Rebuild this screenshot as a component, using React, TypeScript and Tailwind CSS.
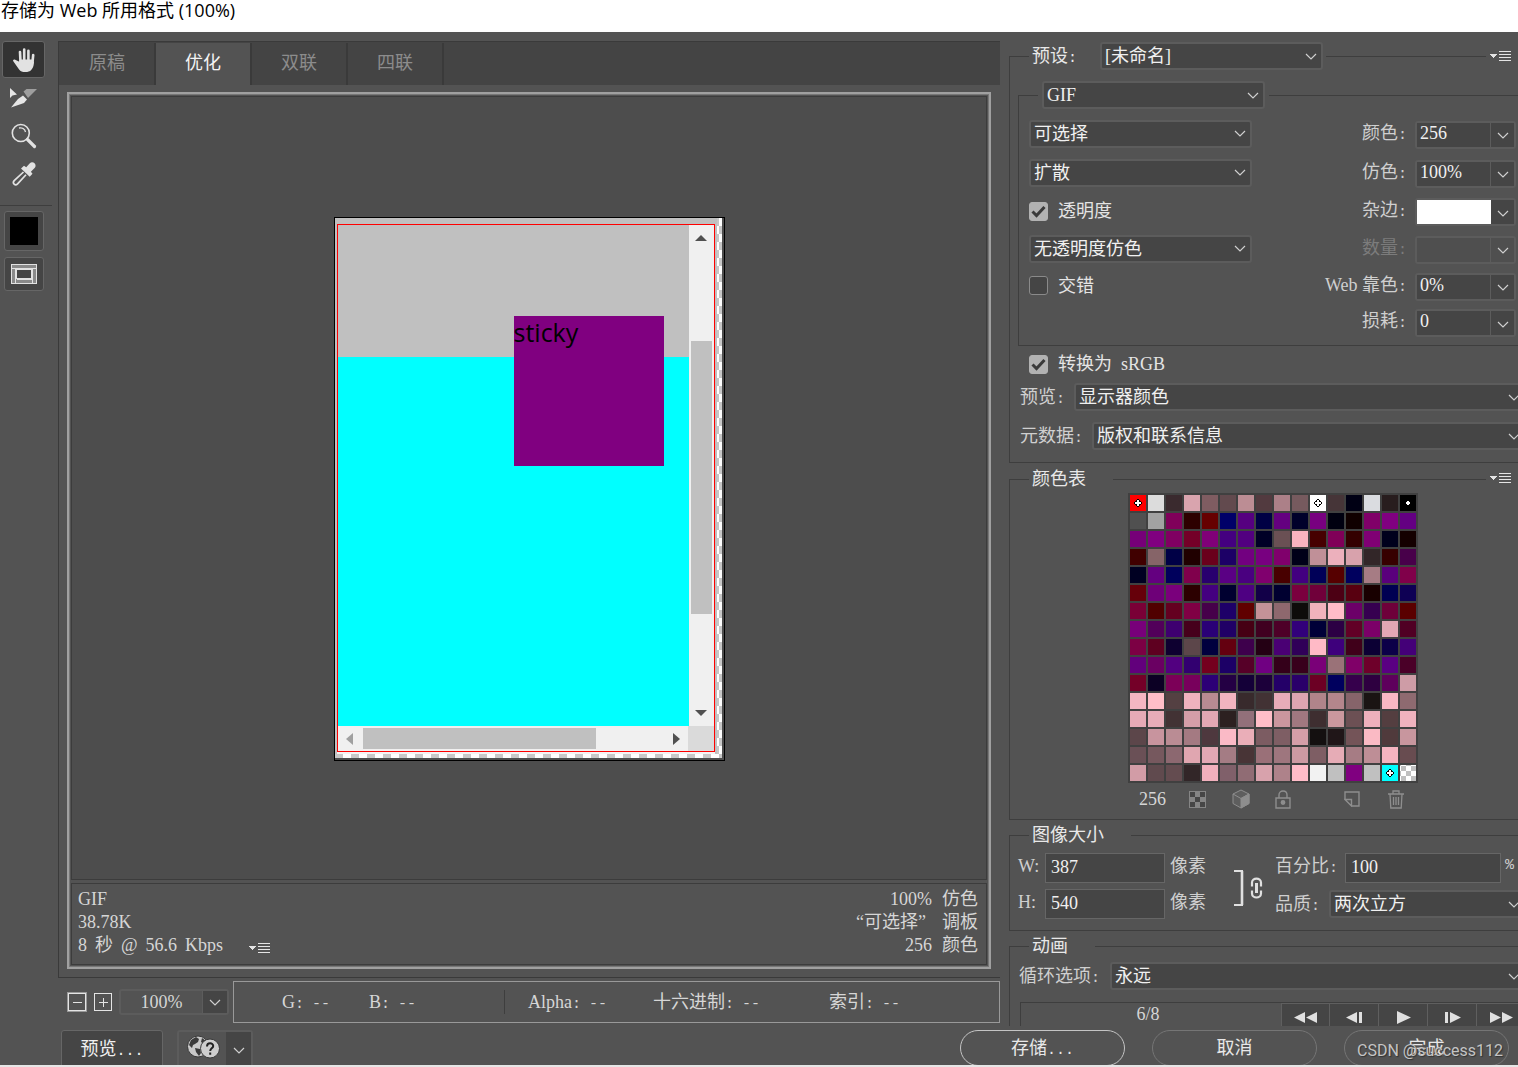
import React, { useId, useState } from "react";

const PALETTE: string[] = [
  "ff0000 dcdcdc 3a2a2e d9a4ae 7f5c61 624a4e bc8d94 523a3f ac8088 765a5e ffffff 463538 000014 dadce0 281d1e 000000",
  "505050 a2a2a2 80005a 2d0000 660000 000068 560080 000044 640080 00002a 780080 000010 100000 800068 800080 640082",
  "760078 800080 800062 740028 800078 440080 520080 000026 6a5054 f8b4c0 460000 800058 340000 800074 00001c 140000",
  "400000 866468 000046 200000 6a001c 1c0066 720080 780080 80006c 000018 c09098 ecb0bc d8a2ac 322628 360000 48004a",
  "000022 640080 00005c 80004c 28006e 5a0084 4a0080 80006e 480000 420080 000058 560000 00005e a67c84 5a007c 80004a",
  "66000a 6e0078 7a007c 2c0000 440080 000030 4e0082 120048 000030 7a003e 70003a 4c0014 580010 180000 000052 0e0054",
  "7a0036 500000 640020 800044 46004a 1e0068 600000 c49298 8e686e 0e0c0a f0b2bc ffbcc8 6c0068 360050 6e003a 5a0000",
  "78007a 52005a 3e0070 46001c 2a0076 200066 460014 400020 4e0028 32007a 000038 2c0044 620026 7c0068 e2a8b4 500024",
  "7c0044 5e0020 0e0030 5c464a 00003e 640010 3e004c 240014 4a0074 300058 ffbac6 3e007c 40001a 0c0034 0c0048 440078",
  "62007c 6a0062 520080 320070 74001e 1c0066 560028 700082 34001a 38001c 7a0078 9a7278 800068 6e002a 5a0082 4a0028",
  "740028 0c0024 7c0058 78005c 2c0076 240044 140038 1c003a 240068 2a006a 6c0024 00005e 36004c 2e0040 5e005c ce9ca6",
  "f4b6c2 ffbec8 544042 efb2be b88a92 f2b4c0 382a2c 423234 e8acb8 dea4b0 b0848a b4868c 86646a 1a1413 f8b8c4 8e6a70",
  "e6aab6 e8acb8 423234 d49ea8 e2a8b4 2c2020 92707a ffbec8 ca969e a07880 3e2e30 ca989e 6c5054 eeb0bc 543e40 f0b2be",
  "5c464a c8949e ba8c94 a47a82 4e383e fabac6 eaaeb8 7c5c62 7e5e64 d49ea8 141010 201618 745458 fabac4 503a3c c8969e",
  "6a5056 76585e 8c6870 e0a6b0 e2a8b4 a47c84 483436 9a7078 9e767e cc9aa2 7e5e64 e6acb6 a67c84 be8e96 f4b4c0 684c50",
  "d29ca6 604a4e 644c50 322628 f0b0bc 80606a 906c74 d8a2ac ae828a ffbcc8 f2f2f2 c0c0c0 800080 c0c0c0 00ffff ffffff",
]
  .join(" ")
  .split(" ");

const MARKED = [0, 10, 15, 254];

/* Colons, dots and dashes take the fixed width of half an ideograph. */
function Txt({ children }: { children: string }) {
  return (
    <>
      {children.split(/(:|\.\.\.|--)/).map((part, i) =>
        i % 2 === 1 ? (
          <span key={i} className="font-['Liberation_Mono',monospace] text-[15px] leading-none">
            {part}
          </span>
        ) : (
          part
        ),
      )}
    </>
  );
}

function Chevron() {
  return (
    <svg width="12" height="7" viewBox="0 0 12 7" fill="none" stroke="#d0d0d0" strokeWidth="1.2" aria-hidden="true">
      <path d="M1 1l5 5 5-5" />
    </svg>
  );
}

function Drop({ id, value, label, className = "" }: { id?: string; value: string; label?: string; className?: string }) {
  return (
    <div className={`relative h-7 ${className}`}>
      <select
        id={id}
        aria-label={label}
        className="block h-7 w-full appearance-none rounded-[3px] border-2 border-[#5c5c5c] bg-[#454545] pr-6 pb-0.5 pl-[3px] leading-6 text-[#f0f0f0] outline-none"
      >
        <option>{value}</option>
      </select>
      <span className="pointer-events-none absolute inset-y-0 right-1.5 flex items-center">
        <Chevron />
      </span>
    </div>
  );
}

function Combo({ label, value, disabled = false, swatch = false }: { label: string; value: string; disabled?: boolean; swatch?: boolean }) {
  const id = useId();
  return (
    <div className="flex items-center justify-end">
      <label htmlFor={id} className={`pr-2 pb-1 leading-6 ${disabled ? "text-[#7c7c7c]" : "text-[#cfcfcf]"}`}>
        <Txt>{label}</Txt>
      </label>
      <div className="flex h-7 w-[101px] rounded-[3px] border-2 border-[#5c5c5c]">
        {swatch ? (
          <button id={id} type="button" className="w-[74px] bg-white" />
        ) : (
          <input
            id={id}
            defaultValue={value}
            disabled={disabled}
            className={`w-[74px] min-w-0 border-r border-[#5c5c5c] pb-1 pl-[3px] leading-5 text-[#f0f0f0] outline-none ${disabled ? "bg-[#4f4f4f]" : "bg-[#454545]"}`}
          />
        )}
        <button type="button" aria-label={`${label} 菜单`} disabled={disabled} className={`flex flex-1 items-center justify-center pt-0.5 ${disabled ? "bg-[#4f4f4f]" : "bg-[#454545]"}`}>
          <Chevron />
        </button>
      </div>
    </div>
  );
}

function Check({ label, on = false }: { label: string; on?: boolean }) {
  const [checked, setChecked] = useState(on);
  return (
    <label className="flex items-center gap-2.5 leading-6 text-[#e4e4e4]">
      <span className="relative flex size-[19px]">
        <input
          type="checkbox"
          checked={checked}
          onChange={(e) => setChecked(e.target.checked)}
          className="size-[19px] appearance-none rounded-[3px] border border-[#8a8a8a] bg-[#454545] checked:border-[#b2b2b2] checked:bg-[#b2b2b2]"
        />
        {checked && (
          <svg className="pointer-events-none absolute inset-0" width="19" height="19" viewBox="0 0 19 19" fill="none" stroke="#3a3a3a" strokeWidth="3" aria-hidden="true">
            <path d="M3.500 9.500l4 4 8-8.500" />
          </svg>
        )}
      </span>
      <span className="whitespace-pre">{label}</span>
    </label>
  );
}

function MenuIcon() {
  return (
    <svg width="22" height="12" viewBox="0 0 22 12" aria-hidden="true" shapeRendering="crispEdges">
      <path d="M0 4h7L3.500 8z" fill="#e4e4e4" />
      <path d="M9 1.500h12M9 4.500h12M9 7.500h12M9 10.500h12" stroke="#e4e4e4" strokeWidth="1" />
    </svg>
  );
}

function PanelMenu({ label }: { label: string }) {
  return (
    <button type="button" aria-label={label} className="absolute -top-5 right-0 bg-[#535353] pr-1.5 pl-1">
      <MenuIcon />
    </button>
  );
}

function Marker({ dark }: { dark: boolean }) {
  return (
    <svg width="16" height="16" viewBox="0 0 16 16" aria-hidden="true" shapeRendering="crispEdges">
      {!dark && <path d="M7 4h2v1h1v1h1v1h1v2h-1v1h-1v1h-1v1H7v-1H6v-1H5V9H4V7h1V6h1V5h1z" fill="#000" />}
      <path d="M7 6h2v1h1v2H9v1H7V9H6V7h1z" fill="#fff" />
      {!dark && <path d="M7 5h2v1H7zM7 10h2v1H7zM5 7h1v2H5zM10 7h1v2h-1z" fill="#fff" />}
    </svg>
  );
}

function Toolbar() {
  return (
    <aside className="flex w-[58px] shrink-0 flex-col pt-[9px]">
      <button type="button" aria-label="抓手工具" className="ml-[2px] flex h-[37px] w-[43px] items-center justify-center rounded-[3px] border border-[#666] bg-[#333]">
        <svg width="24" height="26" viewBox="0 0 24 26" fill="none" stroke="#e2e2e2" strokeLinecap="round" aria-hidden="true">
          <path d="M8.500 15L8 5M12.200 14V2.500M16.400 14V3.800M20.500 15L21.200 8" strokeWidth="2.600" />
          <path d="M6.800 14.500H22c0 3-.6 6-2.600 8.300-1.500 1.900-3.700 2.200-6 2.200-3 0-4.900-.6-6.300-2.600L1.300 14.300c-.8-1.300.6-2.300 1.900-1.500z" fill="#e2e2e2" stroke="none" />
          <path d="M7.500 12.500h13.500v4h-13.500z" fill="#e2e2e2" stroke="none" />
        </svg>
      </button>
      <button type="button" aria-label="切片选择工具" className="ml-[9px] flex h-10 w-7 items-center">
        <svg width="28" height="20" viewBox="0 0 28 20" aria-hidden="true">
          <path d="M1 0v10l2.500-2.500L8 6.500z" fill="#e6e6e6" />
          <path d="M14.500 3.500l3-2.500H28L19 10z" fill="#9e9e9e" />
          <path d="M14 7.500l4 4-3 3.500L2 19.500 9 11z" fill="#e6e6e6" />
        </svg>
      </button>
      <button type="button" aria-label="缩放工具" className="ml-[11px] flex h-9 w-7 items-center">
        <svg width="26" height="26" viewBox="0 0 26 26" fill="none" stroke="#e2e2e2" aria-hidden="true">
          <circle cx="9.800" cy="10" r="8.500" strokeWidth="1.600" />
          <path d="M8 5c3-.6 5.800 1 6.500 4" strokeWidth="1.300" />
          <path d="M16.500 16.500l7 7" strokeWidth="3.200" strokeLinecap="round" />
        </svg>
      </button>
      <button type="button" aria-label="吸管工具" className="ml-[12px] flex h-10 w-7 items-center">
        <svg width="24" height="24" viewBox="0 0 24 24" fill="none" aria-hidden="true">
          <path d="M11.500 10L2.200 18.600c-2.300 2.900 1 5.500 3.400 3.300L14 12.700" stroke="#e2e2e2" strokeWidth="1.700" />
          <path d="M9 6.500l3-2.700 2.200 1.400 3.400-3.700c3.300-3.300 8 1.200 5 4.600l-3.700 3.700 1.600 2-2.800 3z" fill="#e2e2e2" />
        </svg>
      </button>
      <hr className="mt-[11px] w-[52px] border-0 border-t border-[#3e3e3e]" />
      <button type="button" aria-label="吸管颜色" className="mt-[5px] ml-1 flex size-10 items-center justify-center rounded-[3px] border border-[#666] bg-[#454545]">
        <span className="size-7 bg-black" />
      </button>
      <button type="button" aria-label="切换切片可见性" className="mt-1.5 ml-1 flex h-[34px] w-10 items-center justify-center rounded-[3px] border border-[#666] bg-[#454545]">
        <svg width="26" height="20" viewBox="0 0 26 20" fill="none" aria-hidden="true" shapeRendering="crispEdges">
          <path d="M.500.500h25v19H.500z" fill="#8a8a8a" stroke="#e2e2e2" />
          <path d="M5.500 5.500h15v9h-15z" fill="#454545" stroke="#e2e2e2" />
          <path d="M0 4.500h26M4.500 5v15M21.500 5v15M6 15.500h15" stroke="#e2e2e2" />
        </svg>
      </button>
    </aside>
  );
}

function Canvas() {
  return (
    <div className="h-[544px] w-[391px] border border-black bg-[#4d4d4d] pr-0.5 pb-0.5">
      <div className="h-full bg-[conic-gradient(#c8c8c8_25%,#fff_0_50%,#c8c8c8_0_75%,#fff_0)] bg-[length:16px_16px] pr-[5px] pb-1">
        <div className="h-full bg-[#c0c0c0] pt-1.5 pr-0.5 pl-0.5">
          <div className="flex h-full flex-col border-b-2 border-[#f4f4f4]">
            <div className="flex flex-1 flex-col border border-[#f00] bg-[#f0f0f0]">
              <div className="flex flex-1">
                <div className="relative flex flex-1 flex-col">
                  <div className="h-[132px] bg-[#c0c0c0]" />
                  <div className="flex-1 bg-[#0ff]" />
                  <div className="absolute top-[91px] left-44 size-[150px] bg-[#800080] font-['Open_Sans',sans-serif] text-[25px] leading-8 text-black">sticky</div>
                </div>
                <div className="flex w-[25px] flex-col items-center py-2.5">
                  <svg width="12" height="6" viewBox="0 0 12 6" fill="#505050" aria-hidden="true"><path d="M0 6l6-6 6 6z" /></svg>
                  <div className="mt-[100px] h-[273px] w-[21px] bg-[#c0c0c0]" />
                  <svg className="mt-auto" width="12" height="6" viewBox="0 0 12 6" fill="#505050" aria-hidden="true"><path d="M0 0l6 6 6-6z" /></svg>
                </div>
              </div>
              <div className="flex h-[25px] items-center">
                <svg className="ml-2" width="7" height="12" viewBox="0 0 7 12" fill="#a0a0a0" aria-hidden="true"><path d="M7 0L0 6l7 6z" /></svg>
                <div className="ml-2.5 h-[21px] w-[233px] bg-[#c0c0c0]" />
                <svg className="mr-2 ml-auto" width="7" height="12" viewBox="0 0 7 12" fill="#505050" aria-hidden="true"><path d="M0 0l7 6-7 6z" /></svg>
                <div className="h-full w-[26px] bg-[#dadada]" />
              </div>
            </div>
          </div>
        </div>
      </div>
    </div>
  );
}

function Readout({ name, className }: { name: string; className: string }) {
  return (
    <span className={`flex shrink-0 gap-2 ${className}`}>
      <span><Txt>{name}</Txt></span>
      <span><Txt>--</Txt></span>
    </span>
  );
}

function Center() {
  const [tab, setTab] = useState("优化");
  return (
    <section className="flex min-w-0 flex-1 flex-col pt-[9px]">
      <div className="flex min-h-0 flex-1 flex-col border-y border-l border-[#3a3a3a]">
        <div role="tablist" className="flex h-[43px] shrink-0 bg-[#444] pt-px pl-px">
          {["原稿", "优化", "双联", "四联"].map((t) => (
            <button
              key={t}
              type="button"
              role="tab"
              aria-selected={t === tab}
              onClick={() => setTab(t)}
              className={`w-24 border-r-2 border-[#3a3a3a] pb-0.5 ${t === tab ? "bg-[#535353] text-[#f4f4f4]" : "text-[#8c8c8c]"}`}
            >
              {t}
            </button>
          ))}
        </div>
        <div className="mt-[7px] mr-[9px] mb-2 ml-2 flex min-h-0 flex-1 flex-col gap-[3px] border-2 border-[#a0a0a0] p-0.5 shadow-[inset_0_0_0_1px_#777]">
          <div className="flex min-h-0 flex-1 items-center justify-center border border-[#3c3c3c] bg-[#4d4d4d] pt-0.5">
            <Canvas />
          </div>
          <div className="flex h-[82px] shrink-0 justify-between border border-[#3c3c3c] px-1.5 pt-1 text-[#d6d6d6]">
            <div className="flex flex-col leading-[23px]">
              <span>GIF</span>
              <span>38.78K</span>
              <span className="flex items-center gap-2">
                <span>8</span><span>秒</span><span>@</span><span>56.6</span><span>Kbps</span>
                <button type="button" aria-label="下载速度菜单" className="ml-[18px] pt-1"><MenuIcon /></button>
              </span>
            </div>
            <div className="flex flex-col items-end pr-0.5 leading-[23px]">
              <span className="flex gap-2.5"><span>100%</span><span>仿色</span></span>
              <span className="flex gap-4"><span>“可选择”</span><span>调板</span></span>
              <span className="flex gap-2.5"><span>256</span><span>颜色</span></span>
            </div>
          </div>
        </div>
      </div>
      <div className="flex h-12 shrink-0 pt-[3px] text-[#d6d6d6]">
        <div className="flex h-[42px] w-[175px] shrink-0 items-center pl-2.5">
          <button type="button" aria-label="缩小" className="flex size-[18px] items-center justify-center border border-[#e4e4e4] outline outline-[#999]">
            <svg width="9" height="9" stroke="#e4e4e4" aria-hidden="true"><path d="M0 4.500h9" /></svg>
          </button>
          <button type="button" aria-label="放大" className="ml-2 flex size-[18px] items-center justify-center border border-[#e4e4e4]">
            <svg width="9" height="9" stroke="#e4e4e4" aria-hidden="true"><path d="M0 4.500h9M4.500 0v9" /></svg>
          </button>
          <div className="ml-[7px] flex h-[26px] w-[110px] rounded-[3px] border-2 border-[#5c5c5c]">
            <input aria-label="缩放级别" defaultValue="100%" className="min-w-0 flex-1 border-r border-[#5c5c5c] text-center outline-none" />
            <button type="button" aria-label="缩放级别菜单" className="flex w-6 items-center justify-center bg-[#454545]"><Chevron /></button>
          </div>
        </div>
        <div className="flex h-[42px] min-w-0 flex-1 items-center overflow-hidden border border-[#999] leading-6">
          <Readout name="G:" className="ml-12 w-[87px]" />
          <Readout name="B:" className="w-[135px]" />
          <span className="h-6 w-px bg-[#3e3e3e]" />
          <Readout name="Alpha:" className="ml-[23px] w-[125px]" />
          <Readout name="十六进制:" className="w-44" />
          <Readout name="索引:" className="" />
        </div>
      </div>
    </section>
  );
}

const groupClass = "relative min-w-0 border border-r-0 border-[#3e3e3e]";

function ColorTable() {
  return (
    <fieldset className={`${groupClass} mt-[3px] pb-1`}>
      <legend className="ml-[19px] h-[26px] w-[84px] pl-[3px] leading-[26px] text-[#e8e8e8]">颜色表</legend>
      <PanelMenu label="颜色表菜单" />
      <div className="ml-[118px] w-[290px] pt-px">
        <div className="grid grid-cols-16 gap-0.5 bg-[#404040] p-0.5">
          {PALETTE.map((c, i) =>
            i === 255 ? (
              <div key={i} className="size-4 bg-[conic-gradient(#fff_25%,#bfbfbf_0_50%,#fff_0_75%,#bfbfbf_0)] bg-[length:10px_10px] bg-[position:-4px_-4px]" />
            ) : (
              <div key={i} className="size-4" style={{ backgroundColor: `#${c}` }}>
                {MARKED.includes(i) && <Marker dark={i === 15} />}
              </div>
            ),
          )}
        </div>
        <div className="flex h-8 items-center pl-[11px] text-[#d6d6d6]">
          <span className="w-[50px]">256</span>
          <button type="button" aria-label="映射为透明" className="w-[43px]">
            <svg width="17" height="17" viewBox="0 0 17 17" aria-hidden="true">
              <path d="M0 0h17v17H0z" fill="#858585" />
              <path d="M1 1h5v5H1zM11 1h5v5h-5zM6 6h5v5H6zM1 11h5v5H1zM11 11h5v5h-5z" fill="#464646" />
            </svg>
          </button>
          <button type="button" aria-label="Web 安全颜色" className="w-[43px]">
            <svg width="18" height="20" viewBox="0 0 18 20" stroke="#8e8e8e" fill="none" aria-hidden="true">
              <path d="M9 1l8 4v9.500L9 19l-8-4.500V5z" fill="#5e5e5e" />
              <path d="M9 9.500L17 5v9.500L9 19z" fill="#8e8e8e" />
              <path d="M1 5l8 4.500L17 5" />
            </svg>
          </button>
          <button type="button" aria-label="锁定颜色" className="w-[69px]">
            <svg width="16" height="19" viewBox="0 0 16 19" stroke="#8e8e8e" strokeWidth="1.400" fill="none" aria-hidden="true">
              <path d="M1 8h14v10H1zM4 8V5c0-5.300 8-5.300 8 0v3" />
              <circle cx="8" cy="12.500" r="1.700" fill="#8e8e8e" />
            </svg>
          </button>
          <button type="button" aria-label="新建颜色" className="w-[43px]">
            <svg width="16" height="16" viewBox="0 0 16 16" stroke="#8e8e8e" strokeWidth="1.400" fill="none" aria-hidden="true">
              <path d="M1 8V1h14v14H8M1 8.500h6.500V15zM1 8.500L7.500 15" />
            </svg>
          </button>
          <button type="button" aria-label="删除颜色">
            <svg width="18" height="19" viewBox="0 0 18 19" stroke="#8e8e8e" strokeWidth="1.300" fill="none" aria-hidden="true">
              <path d="M1 4h16M6 4V1h6v3M3 4l.8 14h10.400L15 4M6.500 7v8M9 7v8M11.500 7v8" />
            </svg>
          </button>
        </div>
      </div>
    </fieldset>
  );
}

function ImageSize() {
  const box = "h-[30px] border border-[#666] bg-[#454545] pl-[5px] pb-0.5 text-[#f0f0f0] outline-none";
  return (
    <fieldset className={`${groupClass} mt-0.5 pb-[11px]`}>
      <legend className="ml-[19px] h-[26px] w-[102px] pl-[3px] leading-[26px] text-[#e8e8e8]">图像大小</legend>
      <div className="flex items-center pt-[5px] pl-2 leading-[26px] text-[#cfcfcf]">
        <div className="flex w-[216px] flex-col gap-1.5">
          <div className="flex h-[30px]">
            <label htmlFor="w" className="w-[27px]">W:</label>
            <input id="w" defaultValue="387" className={`w-[120px] ${box}`} />
            <span className="pl-[5px]">像素</span>
          </div>
          <div className="flex h-[30px]">
            <label htmlFor="h" className="w-[27px]">H:</label>
            <input id="h" defaultValue="540" className={`w-[120px] ${box}`} />
            <span className="pl-[5px]">像素</span>
          </div>
        </div>
        <button type="button" aria-label="约束比例" className="w-[41px] pt-1">
          <svg width="30" height="36" viewBox="0 0 30 36" fill="none" stroke="#e0e0e0" aria-hidden="true">
            <path d="M0 1h8v34H0" strokeWidth="2" />
            <path d="M8 1v34" strokeWidth="2.600" />
            <path d="M18 16.500v-4c0-5.300 9-5.300 9 0v4M18 20.500v3c0 5.300 9 5.300 9 0v-3" strokeWidth="2.200" />
            <path d="M22.500 13v10" strokeWidth="3" />
          </svg>
        </button>
        <div className="-mr-2 flex flex-1 flex-col gap-1.5">
          <div className="flex h-[30px]">
            <label htmlFor="pct" className="w-[70px]"><Txt>百分比:</Txt></label>
            <input id="pct" defaultValue="100" className={`w-[156px] ${box}`} />
            <span className="pl-1 font-['Liberation_Mono',monospace] text-[15px]">%</span>
          </div>
          <div className="flex h-[30px] items-center">
            <label htmlFor="quality" className="w-[54px]"><Txt>品质:</Txt></label>
            <Drop id="quality" value="两次立方" className="flex-1" />
          </div>
        </div>
      </div>
    </fieldset>
  );
}

const PLAYBACK: [string, string][] = [
  ["第一帧", "M11 0v11L0 5.500zM23 0v11L12 5.500z"],
  ["上一帧", "M14 0v11L3 5.500zM16 0h3v11h-3z"],
  ["播放", "M5 -1v13l14-6.500z"],
  ["下一帧", "M4 0h3v11H4zM9 0v11l11-5.500z"],
  ["最后一帧", "M0 0v11l11-5.500zM12 0v11l11-5.500z"],
];

function Animation() {
  return (
    <fieldset className={`${groupClass} mt-0.5 border-b-0`}>
      <legend className="ml-[19px] h-[26px] w-[66px] pl-[3px] leading-[26px] text-[#e8e8e8]">动画</legend>
      <div className="-mr-2 flex pt-[3px] pl-[9px] text-[#cfcfcf]">
        <label htmlFor="loop" className="w-[91px] leading-7"><Txt>循环选项:</Txt></label>
        <Drop id="loop" value="永远" className="flex-1" />
      </div>
      <div className="mt-3 -mr-2 ml-2.5 flex border-t border-l border-[#3e3e3e]">
        <span className="flex-1 self-start pr-1.5 text-center leading-[22px] text-[#d6d6d6]">6/8</span>
        {PLAYBACK.map(([name, d]) => (
          <button key={name} type="button" aria-label={name} className="flex h-7 w-[49px] items-center justify-center border border-l-0 border-[#5f5f5f] bg-[#454545] first-of-type:border-l">
            <svg width="23" height="11" viewBox="0 0 23 11" className="overflow-visible" fill="#e0e0e0" aria-hidden="true">
              <path d={d} />
            </svg>
          </button>
        ))}
      </div>
    </fieldset>
  );
}

function Settings() {
  return (
    <section className="w-[509px] shrink-0 overflow-hidden pt-2.5">
      <fieldset className={`${groupClass} pb-3`}>
        <legend className="ml-[19px] flex px-[3px] text-[#e8e8e8]">
          <label htmlFor="preset" className="w-[68px] leading-7"><Txt>预设:</Txt></label>
          <Drop id="preset" value="[未命名]" className="w-[223px]" />
        </legend>
        <PanelMenu label="预设菜单" />
        <div className="pt-[11px] pl-2">
          <fieldset className={`${groupClass} pb-1`}>
            <legend className="ml-[19px] px-1">
              <Drop label="格式" value="GIF" className="w-[223px]" />
            </legend>
            <div className="flex justify-between pt-[5px] pr-0.5 pl-2.5">
              <div className="grid w-[223px] grid-rows-[39px_39px_38px_37px_37px_36px] items-center">
                <Drop label="减低颜色深度算法" value="可选择" />
                <Drop label="仿色算法" value="扩散" />
                <Check label="透明度" on />
                <Drop label="透明度仿色算法" value="无透明度仿色" />
                <Check label="交错" />
              </div>
              <div className="grid grid-rows-[39px_39px_38px_37px_37px_36px] items-center pt-px">
                <Combo label="颜色:" value="256" />
                <Combo label="仿色:" value="100%" />
                <Combo label="杂边:" value="" swatch />
                <Combo label="数量:" value="" disabled />
                <Combo label="Web 靠色:" value="0%" />
                <Combo label="损耗:" value="0" />
              </div>
            </div>
          </fieldset>
        </div>
        <div className="flex h-9 items-center pl-[19px]">
          <Check label="转换为  sRGB" on />
        </div>
        <div className="-mr-2 flex flex-col gap-[11px] pt-px pl-2.5 text-[#cfcfcf]">
          <div className="flex">
            <label htmlFor="preview" className="w-[54px] leading-7"><Txt>预览:</Txt></label>
            <Drop id="preview" value="显示器颜色" className="flex-1" />
          </div>
          <div className="flex">
            <label htmlFor="meta" className="w-[72px] leading-7"><Txt>元数据:</Txt></label>
            <Drop id="meta" value="版权和联系信息" className="flex-1" />
          </div>
        </div>
      </fieldset>
      <ColorTable />
      <ImageSize />
      <Animation />
    </section>
  );
}

function Footer() {
  const pill = "h-9 w-[165px] rounded-full border text-[#e8e8e8]";
  return (
    <footer className="relative flex h-[39px] shrink-0 items-start overflow-hidden pt-1 pr-[9px] pl-[61px]">
      <button type="button" className="h-10 w-[102px] rounded-[3px] border border-[#666] bg-[#454545] pb-0.5 text-[#f0f0f0]"><Txt>预览...</Txt></button>
      <div className="ml-3.5 flex h-10 w-[76px] rounded-[3px] border-2 border-[#5c5c5c]">
        <button type="button" aria-label="在浏览器中预览" className="flex flex-1 items-start justify-center pt-[3px]">
          <svg width="34" height="24" viewBox="0 0 34 24" aria-hidden="true">
            <circle cx="12" cy="11.500" r="10.500" fill="#c8c8c8" stroke="#3a3a3a" />
            <path d="M5 5l5-3 3 2-1 3-3 2-2 1-1 3-3-3zM9 13l5 1 1 4-2 3-3-4zM16 3l4 3-2 3-3-2z" fill="#3a3a3a" />
            <circle cx="24" cy="13.500" r="9.500" fill="#cdcdcd" stroke="#3a3a3a" />
            <path d="M21 11.500c0-4.200 6.200-4 6.200-.6 0 2.400-3 2.500-3 5M24.200 17.500v2.200" fill="none" stroke="#222" strokeWidth="2" />
          </svg>
        </button>
        <button type="button" aria-label="浏览器菜单" className="flex w-[25px] items-center justify-center bg-[#454545]"><Chevron /></button>
      </div>
      <div className="ml-auto flex gap-[27px]">
        <button type="button" className={`${pill} border-[#c4c4c4]`}><Txt>存储...</Txt></button>
        <button type="button" className={`${pill} border-[#757575]`}>取消</button>
        <button type="button" className={`${pill} border-[#757575]`}>完成</button>
      </div>
      <span className="pointer-events-none absolute top-[13px] right-[15px] font-['Roboto',sans-serif] text-[16px] leading-6 text-[#c4c4c4] [text-shadow:1px_1px_1px_#333]">
        CSDN @success112
      </span>
    </footer>
  );
}

export default function App() {
  return (
    <div className="flex h-screen flex-col overflow-hidden border-b-2 border-[#e6e6e6] bg-[#535353] font-['Liberation_Serif','Noto_Sans_CJK_SC',serif] text-[18px]">
      <header className="h-8 shrink-0 bg-white">
        <h1 className="pl-px font-['Open_Sans','Noto_Sans_CJK_SC',sans-serif] text-[18px] leading-5 text-black">存储为 Web 所用格式 (100%)</h1>
      </header>
      <main className="flex min-h-0 flex-1 overflow-hidden">
        <Toolbar />
        <Center />
        <div className="w-[9px] shrink-0" />
        <Settings />
      </main>
      <Footer />
    </div>
  );
}
